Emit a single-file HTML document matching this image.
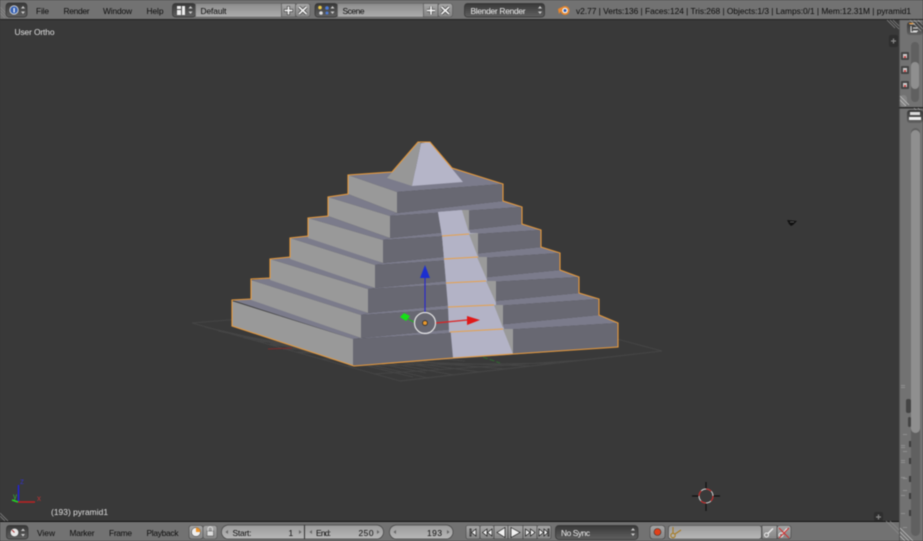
<!DOCTYPE html>
<html><head><meta charset="utf-8"><style>
html,body{margin:0;padding:0;background:#393939;overflow:hidden}
svg{display:block;filter:blur(.42px)}
text{font-family:"Liberation Sans",sans-serif;font-size:8.4px;fill:#0c0c0c}
.v{fill:#e0e0e0}
.w{fill:#eee}
.l{fill:#999}.d{fill:#686872}.t{fill:#7b7b8b}.s{fill:#b3b3c6}
</style></head><body>
<svg width="923" height="541" viewBox="0 0 923 541" xmlns="http://www.w3.org/2000/svg">
<defs>
<linearGradient id="dk" x1="0" y1="0" x2="0" y2="1"><stop offset="0" stop-color="#383838"/><stop offset="1" stop-color="#606060"/></linearGradient>
<linearGradient id="fd" x1="0" y1="0" x2="0" y2="1"><stop offset="0" stop-color="#8c8c8c"/><stop offset="1" stop-color="#adadad"/></linearGradient>
<linearGradient id="bt" x1="0" y1="0" x2="0" y2="1"><stop offset="0" stop-color="#a6a6a6"/><stop offset="1" stop-color="#858585"/></linearGradient>
<linearGradient id="num" x1="0" y1="0" x2="0" y2="1"><stop offset="0" stop-color="#9a9a9a"/><stop offset="1" stop-color="#b8b8b8"/></linearGradient>
</defs>
<rect width="923" height="541" fill="#727272"/>
<rect x="0" y="20" width="899" height="501" fill="#393939"/>
<rect x="0" y="19" width="923" height="1" fill="#222"/>
<rect x="0" y="521" width="899" height="1" fill="#111"/>
<rect x="899" y="20" width="1" height="521" fill="#555"/>

<!-- grid -->
<g stroke="#454545" stroke-width="1" fill="none">
<path d="M192 323L400 381L662 351L470 300Z"/>
<path d="M205 327L413 377M218 331L426 373M231 334L439 369M244 338L452 365M257 341L465 361M270 345L478 357M283 349L491 354M296 352L504 350"/>
<path d="M218 330L428 378M244 337L454 375M270 344L480 372M296 352L506 369M322 359L532 366M348 366L558 363M374 374L584 360M400 381L610 357M425 378L636 354"/>
</g>
<path d="M268 349L292 348" stroke="#7a2b2b" stroke-width="1"/>
<path d="M483 357L500 363" stroke="#2f6b2f" stroke-width="1" stroke-dasharray="5 2"/>

<!-- pyramid tiers -->
<g>
<polygon class="t" points="232,300 251,299 361,338 353,339"/>
<polygon class="t" points="353,339 361,338 599,315 618,323"/>
<polygon class="l" points="232,301 353,339 353,366 232,326"/>
<polygon class="d" points="353,339 618,323 618,347 353,366"/>
<polygon class="t" points="251,280 270,278 368,313 361,315"/>
<polygon class="t" points="361,315 368,313 579,293 599,299"/>
<polygon class="l" points="251,280 361,315 361,338 251,300"/>
<polygon class="d" points="361,315 599,299 599,315 361,338"/>
<polygon class="t" points="270,259 290,257 375,288 368,289"/>
<polygon class="t" points="368,289 375,288 560,270 579,277"/>
<polygon class="l" points="270,259 368,289 368,313 270,280"/>
<polygon class="d" points="368,289 579,277 579,293 368,313"/>
<polygon class="t" points="290,238 308,236 383,263 375,265"/>
<polygon class="t" points="375,265 383,263 541,247 560,253"/>
<polygon class="l" points="290,238 375,265 375,288 290,259"/>
<polygon class="d" points="375,265 560,253 560,270 375,288"/>
<polygon class="t" points="308,218 328,216 390,238 383,240"/>
<polygon class="t" points="383,240 390,238 522,224 541,230"/>
<polygon class="l" points="308,218 383,240 383,263 308,238"/>
<polygon class="d" points="383,240 541,230 541,247 383,263"/>
<polygon class="t" points="328,197 348,194 397,213 390,216"/>
<polygon class="t" points="390,216 397,213 503,201 522,207"/>
<polygon class="l" points="328,197 390,216 390,238 328,216"/>
<polygon class="d" points="390,216 522,207 522,224 390,238"/>
<polygon class="t" points="348,175 392,172 452,168 503,184 397,192"/>
<polygon class="l" points="348,175 397,192 397,213 348,194"/>
<polygon class="d" points="397,192 503,184 503,201 397,213"/>
<polygon points="418,142 421,143 412,186 387,178" fill="#979797"/>
<polygon points="421,143 430,142 463,182 412,186" fill="#b5b5c8"/>
</g>

<!-- stairs -->
<polygon class="s" points="438,212 462,210 469,233 478,233 478,257 487,257 487,281 496,281 496,305 503,305 503,329 513,354 453,358 453,333 449,332 448,307 446,283 444,259 442,236"/>
<polygon class="s" points="462,210 513,354 453,358 442,236 438,212"/>
<polygon points="462,210 469,210 469,233" fill="#9a9a9a"/>
<polygon points="469,234 478,233 478,257" fill="#9a9a9a"/>
<polygon points="477,257 487,257 487,280" fill="#9a9a9a"/>
<polygon points="486,281 496,281 496,303" fill="#9a9a9a"/>
<polygon points="494,305 503,305 503,328" fill="#9a9a9a"/>
<polygon points="503,329 513,329 513,354" fill="#9a9a9a"/>
<g stroke="#e8a14a" stroke-width="1" fill="none">
<path d="M442 236L469 234M444 259L478 257M446 283L486 281M448 307L494 305M450 332L503 329"/>
</g>
<!-- outline -->
<path d="M418 142L430 142L452 168L503 184L503 201L522 207L522 224L541 230L541 247L560 253L560 270L579 277L579 293L599 299L599 315L618 323L618 347L513 354L453 358L354 366L232 326L232 300L251 299L251 279L270 278L270 259L290 257L290 238L308 236L308 218L328 216L328 197L348 194L348 175L392 172Z" fill="none" stroke="#e89a3c" stroke-width="1.1"/>

<!-- manipulator -->
<path d="M425 312V276" stroke="#2a2ac8" stroke-width="1.2"/>
<polygon points="425,265 430,278 420,278" fill="#1c2fd0"/>
<path d="M436 323L467 320" stroke="#d22" stroke-width="1.2"/>
<polygon points="480,320 467,316 467,325" fill="#e01818"/>
<path d="M414 322L404 317" stroke="#22b022" stroke-width="1.2"/>
<polygon points="400,317 404,313 410,316 406,321" fill="#16e016"/>
<circle cx="425" cy="323" r="10.5" fill="none" stroke="#e4e4e4" stroke-width="1.2"/>
<circle cx="425" cy="323" r="2.4" fill="#e8982e" stroke="#222" stroke-width=".7"/>

<!-- lamp-ish -->
<path d="M787 220L797 221L793 225L791 226L789 224Z" fill="#111"/>
<path d="M790 222L794 222" stroke="#555" stroke-width="1"/>

<!-- 3d cursor -->
<g fill="none">
<path d="M692 496H699M713 496H720M706 482V489M706 503V511" stroke="#111" stroke-width="1.2"/>
<circle cx="706" cy="496" r="7" stroke="#d8d8d8" stroke-width="1"/>
<circle cx="706" cy="496" r="7" stroke="#c82020" stroke-width="1.1" stroke-dasharray="5.5 5.5"/>
</g>

<!-- axis -->
<path d="M18.5 502V485" stroke="#2222d8" stroke-width="1.5"/>
<path d="M18 502H35" stroke="#c02222" stroke-width="1.5"/>
<path d="M18 502L12 500" stroke="#22d822" stroke-width="1.5"/>
<text x="20" y="484" style="font-size:8px;fill:#3333bb">z</text>
<text x="37" y="501" style="font-size:8px;fill:#b33">x</text>
<text x="13" y="499" style="font-size:8px;fill:#3b3">y</text>

<text class="v" x="14.500" y="35" textLength="40">User Ortho</text>
<text class="v" x="51" y="515" textLength="57">(193) pyramid1</text>

<!-- corner hatching -->
<g stroke="#8a8a8a" stroke-width=".7">
<path d="M0 10L8 18M0 13L5 18M0 7L10 17"/>
<path d="M0 513L8 521M0 516L5 521"/>
<path d="M890 20L899 29M893 20L899 26M887 20L895 28"/>
<path d="M890 521L899 530M886 521L899 534"/>
</g>

<!-- + tabs -->
<rect x="889" y="35" width="9" height="12" rx="2" fill="#2e2e2e"/>
<path d="M891 41H896M893.500 38.500V43.500" stroke="#888" stroke-width="1.200"/>
<rect x="874" y="512" width="9" height="9" rx="2" fill="#2e2e2e"/>
<path d="M876 517H881M878.500 514.500V519.500" stroke="#888" stroke-width="1.200"/>

<!-- header -->
<rect x="6" y="3" width="21" height="14" rx="3" fill="url(#dk)" stroke="#333" stroke-width=".7"/>
<circle cx="14" cy="10" r="4.200" fill="#3a64b4" stroke="#ddd" stroke-width=".8"/>
<rect x="13.500" y="8" width="1.200" height="4.500" fill="#fff"/>
<path d="M21 8.500L23 6L25 8.500ZM21 11.500L23 14L25 11.500Z" fill="#ccc"/>
<text x="36" y="14" textLength="13">File</text>
<text x="63.500" y="14" textLength="26">Render</text>
<text x="103" y="14" textLength="29">Window</text>
<text x="146.500" y="14" textLength="17">Help</text>

<rect x="172.500" y="3.500" width="23" height="13.500" rx="3" fill="url(#dk)" stroke="#333" stroke-width=".7"/>
<path d="M177 6H181V9H177ZM177 10H181V15H177ZM182 6H185V15H182Z" fill="#eee"/>
<path d="M188.500 8.500L190.500 6L192.500 8.500ZM188.500 11.500L190.500 14L192.500 11.500Z" fill="#ccc"/>
<rect x="195.500" y="3.500" width="86" height="13.500" fill="url(#fd)" stroke="#666" stroke-width=".6"/>
<text x="200.500" y="14" textLength="26">Default</text>
<rect x="281.500" y="3.500" width="14" height="13.500" fill="url(#bt)" stroke="#555" stroke-width=".6"/>
<rect x="295.500" y="3.500" width="14.500" height="13.500" rx="2.500" fill="url(#bt)" stroke="#555" stroke-width=".6"/>
<path d="M284 10.500H293M288.500 6V15" stroke="#333" stroke-width="3"/><path d="M284.500 10.500H292.500M288.500 6.500V14.500" stroke="#f2f2f2" stroke-width="1.800"/>
<path d="M299 7L306.500 14M306.500 7L299 14" stroke="#333" stroke-width="3"/><path d="M299 7L306.500 14M306.500 7L299 14" stroke="#f2f2f2" stroke-width="1.800"/>

<rect x="315" y="3.500" width="22.500" height="13.500" rx="3" fill="url(#dk)" stroke="#333" stroke-width=".7"/>
<circle cx="320" cy="7.500" r="1.800" fill="#e8c84a"/><circle cx="327" cy="8" r="1.800" fill="#4a7ad8"/><circle cx="321" cy="13" r="1.800" fill="#ddd"/><circle cx="327" cy="13" r="1.500" fill="#4a7ad8"/>
<path d="M330.500 8.500L332.500 6L334.500 8.500ZM330.500 11.500L332.500 14L334.500 11.500Z" fill="#ccc"/>
<rect x="337.500" y="3.500" width="86" height="13.500" fill="url(#fd)" stroke="#666" stroke-width=".6"/>
<text x="342.500" y="14" textLength="22">Scene</text>
<rect x="423.500" y="3.500" width="14.500" height="13.500" fill="url(#bt)" stroke="#555" stroke-width=".6"/>
<rect x="438" y="3.500" width="14.500" height="13.500" rx="2.500" fill="url(#bt)" stroke="#555" stroke-width=".6"/>
<path d="M427 10.500H435M431 6.500V14.500" stroke="#333" stroke-width="3"/><path d="M427 10.500H435M431 6.500V14.500" stroke="#f2f2f2" stroke-width="1.800"/>
<path d="M441.500 7L449 14M449 7L441.500 14" stroke="#333" stroke-width="3"/><path d="M441.500 7L449 14M449 7L441.500 14" stroke="#f2f2f2" stroke-width="1.800"/>

<rect x="464.500" y="3.500" width="80" height="13.500" rx="3" fill="url(#dk)" stroke="#333" stroke-width=".7"/>
<text class="w" x="470.500" y="14" textLength="55">Blender Render</text>
<path d="M538 8.500L540 6L542 8.500ZM538 11.500L540 14L542 11.500Z" fill="#ccc"/>

<circle cx="565" cy="10.500" r="4.500" fill="#e8862c"/>
<path d="M558 9L562 7L561 11L559 14Z" fill="#e8862c"/>
<circle cx="565" cy="10.500" r="2.800" fill="#f0f0f0"/>
<circle cx="565" cy="10.500" r="1.500" fill="#2a5ab0"/>
<text x="576" y="14" textLength="335">v2.77 | Verts:136 | Faces:124 | Tris:268 | Objects:1/3 | Lamps:0/1 | Mem:12.31M | pyramid1</text>

<!-- bottom bar -->
<rect x="6.500" y="525.500" width="21.500" height="13.500" rx="3" fill="url(#dk)" stroke="#333" stroke-width=".7"/>
<circle cx="14.500" cy="532.500" r="4.200" fill="#e8e8e8" stroke="#333" stroke-width=".5"/>
<path d="M14.500 532.500L12 530" stroke="#a33" stroke-width="1"/>
<path d="M21 531L23 528.500L25 531ZM21 534L23 536.500L25 534Z" fill="#ccc"/>
<text x="37" y="536" textLength="18">View</text>
<text x="69.500" y="536" textLength="25">Marker</text>
<text x="109" y="536" textLength="23">Frame</text>
<text x="146.500" y="536" textLength="32">Playback</text>

<rect x="189" y="525.500" width="14" height="13.500" rx="2.500" fill="url(#bt)" stroke="#444" stroke-width=".6"/>
<rect x="203" y="525.500" width="14" height="13.500" rx="2.500" fill="url(#bt)" stroke="#555" stroke-width=".6"/>
<circle cx="196" cy="532" r="4.500" fill="#eee" stroke="#333" stroke-width=".5"/>
<path d="M196 532V527.500A4.500 4.500 0 0 1 200.500 532Z" fill="#e8922c"/>
<rect x="207" y="531" width="6.500" height="5" fill="#ddd" stroke="#444" stroke-width=".5"/>
<path d="M208 531V529A2.200 2.200 0 0 1 212.500 529V531" fill="none" stroke="#ddd" stroke-width="1"/>

<rect x="221.500" y="525" width="162" height="14" rx="7" fill="url(#num)" stroke="#444" stroke-width=".7"/>
<rect x="304" y="525" width="1" height="14" fill="#333"/>
<text x="232.500" y="536" textLength="19">Start:</text>
<text x="288.500" y="536">1</text>
<text x="316" y="536" textLength="15">End:</text>
<text x="358.500" y="536" textLength="15">250</text>
<path d="M228 530L225.500 532L228 534ZM299 530L301.500 532L299 534ZM312 530L309.500 532L312 534ZM377 530L379.500 532L377 534Z" fill="#666"/>
<rect x="389.500" y="525" width="63.500" height="14" rx="7" fill="url(#num)" stroke="#444" stroke-width=".7"/>
<text x="427" y="536" textLength="15">193</text>
<path d="M396 530L393.500 532L396 534ZM447 530L449.500 532L447 534Z" fill="#666"/>

<g fill="url(#bt)" stroke="#444" stroke-width=".6">
<rect x="466" y="525.500" width="14" height="13.500" rx="2"/>
<rect x="480" y="525.500" width="14" height="13.500" rx="2"/>
<rect x="494" y="525.500" width="14" height="13.500"/>
<rect x="508" y="525.500" width="15" height="13.500"/>
<rect x="523" y="525.500" width="14" height="13.500"/>
<rect x="537" y="525.500" width="14" height="13.500" rx="2"/>
</g>
<g fill="#f0f0f0" stroke="#1a1a1a" stroke-width=".7">
<path d="M470 529V536H471V529ZM476 529L471.500 532.500L476 536Z"/>
<path d="M487 529L482.500 532.500L487 536ZM492 529L487.500 532.500L492 536Z"/>
<path d="M505 527.500L497 532.500L505 537.500Z"/>
<path d="M511 527.500L520 532.500L511 537.500Z"/>
<path d="M525.500 529L530 532.500L525.500 536ZM530.500 529L535 532.500L530.500 536Z"/>
<path d="M539 529L543.500 532.500L539 536ZM544 529L548 532.500L544 536ZM548 529H549V536H548Z"/>
</g>

<rect x="555.500" y="525.500" width="82.500" height="14" rx="3.500" fill="url(#dk)" stroke="#333" stroke-width=".7"/>
<text class="w" x="561" y="536" textLength="29">No Sync</text>
<path d="M631 530.500L633 528L635 530.500ZM631 533.500L633 536L635 533.500Z" fill="#ccc"/>

<rect x="650" y="525.500" width="15" height="13.500" rx="3" fill="url(#bt)" stroke="#444" stroke-width=".6"/>
<circle cx="657.500" cy="532" r="3.500" fill="#e0401a" stroke="#333" stroke-width=".6"/>
<rect x="668.500" y="525.500" width="93" height="13.500" rx="2.500" fill="url(#num)" stroke="#444" stroke-width=".6"/>
<circle cx="673" cy="535.500" r="2.200" fill="none" stroke="#a87c24" stroke-width="1.100"/>
<path d="M673 533V527M675 534L681 530" stroke="#a87c24" stroke-width="1.100"/>
<rect x="762" y="525.500" width="15" height="13.500" fill="url(#bt)" stroke="#444" stroke-width=".6"/>
<rect x="777" y="525.500" width="14" height="13.500" rx="2.500" fill="url(#bt)" stroke="#444" stroke-width=".6"/>
<circle cx="766.500" cy="535" r="2" fill="none" stroke="#eee" stroke-width="1"/><path d="M768 533.500L773 528.500" stroke="#eee" stroke-width="1.300"/>
<circle cx="781" cy="535" r="2" fill="none" stroke="#eee" stroke-width="1"/><path d="M782.500 533.500L787 528.500" stroke="#eee" stroke-width="1.300"/>
<path d="M779 528L789 538M789 528L779 538" stroke="#d03030" stroke-width="1"/>

<!-- right panel -->
<rect x="900" y="20" width="23" height="87" fill="#727272"/>
<rect x="899" y="107" width="24" height="1.500" fill="#2c2c2c"/>
<rect x="907" y="22" width="16" height="13" rx="3" fill="url(#dk)"/>
<path d="M910 24H915M911 26V32H917M913 28H918M913 31H918" stroke="#ddd" stroke-width="1" fill="none"/>
<path d="M909 23.500H914" stroke="#e8922c" stroke-width="1.200"/>
<rect x="911" y="42" width="8" height="60" rx="4" fill="#606060"/>
<rect x="911" y="62" width="8" height="27" rx="4" fill="#8f8f8f"/>
<g>
<rect x="901" y="52" width="8" height="8" rx="1" fill="#444"/><rect x="903" y="54" width="4" height="4" fill="#ccc"/><rect x="904" y="56" width="2" height="2" fill="#c44"/>
<rect x="901" y="66" width="8" height="8" rx="1" fill="#444"/><rect x="903" y="68" width="4" height="4" fill="#ccc"/><rect x="904" y="70" width="2" height="2" fill="#c44"/>
<rect x="901" y="81" width="8" height="8" rx="1" fill="#444"/><rect x="903" y="83" width="4" height="4" fill="#ccc"/><rect x="904" y="85" width="2" height="2" fill="#c44"/>
</g>
<rect x="900" y="95" width="7" height="12" rx="3.500" fill="#848484"/>
<path d="M900 96L909 105M900 100L906 106" stroke="#ccc" stroke-width=".6"/>
<path d="M914 20L923 29M918 20L923 25M910 20L921 31" stroke="#aaa" stroke-width=".6"/>
<path d="M914 108L923 117M918 108L923 113" stroke="#aaa" stroke-width=".6"/>
<rect x="907" y="110" width="16" height="13" rx="3" fill="url(#dk)"/>
<rect x="910" y="112" width="10" height="3" fill="#ddd"/><rect x="909" y="117" width="12" height="3" fill="#eee"/>
<rect x="911" y="128" width="9" height="408" rx="4.500" fill="#606060"/>
<rect x="911" y="130" width="9" height="303" rx="4.500" fill="#8f8f8f"/>
<rect x="906" y="399" width="5" height="14" rx="2" fill="#444"/>
<rect x="908" y="417" width="3" height="10" rx="1.500" fill="#444"/>
<g fill="#8f8f8f">
<rect x="901" y="385" width="4" height="1"/><rect x="901" y="387" width="4" height="1"/><rect x="903" y="434" width="4" height="1"/>
<rect x="901" y="445" width="4" height="1"/><rect x="901" y="447" width="4" height="1"/><rect x="903" y="451" width="4" height="1"/>
<rect x="901" y="460" width="4" height="1"/><rect x="901" y="462" width="4" height="1"/><rect x="903" y="478" width="4" height="1"/>
<rect x="901" y="477" width="4" height="1"/><rect x="901" y="495" width="4" height="1"/><rect x="903" y="490" width="4" height="1"/>
<rect x="901" y="513" width="4" height="1"/><rect x="903" y="527" width="4" height="1"/>
</g>
<g fill="#3c3c3c">
<rect x="909" y="441" width="2" height="6"/><rect x="909" y="458" width="2" height="6"/><rect x="909" y="476" width="2" height="6"/><rect x="909" y="493" width="2" height="6"/><rect x="909" y="510" width="2" height="6"/>
</g>
<path d="M900 532L909 541M900 536L905 541M900 528L913 541" stroke="#ccc" stroke-width=".6"/>
</svg>
</body></html>
